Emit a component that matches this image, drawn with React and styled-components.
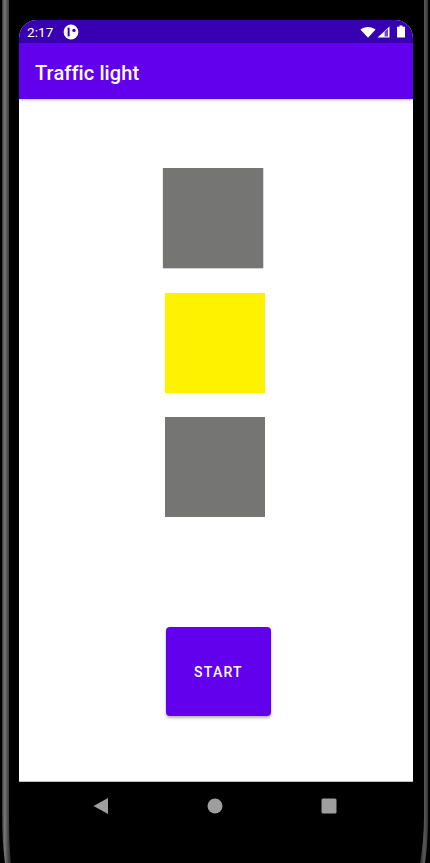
import React from 'react';
import styled, { createGlobalStyle } from 'styled-components';

const GlobalStyle = createGlobalStyle`
  html, body {
    margin: 0;
    padding: 0;
    background: #000;
  }
  body {
    font-family: Roboto, 'Liberation Sans', sans-serif;
  }
`;

const App = () => {
  return (
    <Device>
      <GlobalStyle />
      <Bezel width="430" height="863" viewBox="0 0 430 863">
        <defs>
          <linearGradient id="leftEdge" x1="0" x2="1" y1="0" y2="0">
            <stop offset="0" stopColor="#363638" />
            <stop offset="0.3" stopColor="#79797c" />
            <stop offset="0.65" stopColor="#4a4a4c" />
            <stop offset="1" stopColor="#252527" />
          </linearGradient>
          <linearGradient id="rightEdge" x1="0" x2="1" y1="0" y2="0">
            <stop offset="0" stopColor="#252527" />
            <stop offset="0.5" stopColor="#58585c" />
            <stop offset="1" stopColor="#38383a" />
          </linearGradient>
        </defs>
        <path d="M2 0 H9 V815 Q9 845 11 863 H5 Q2 840 2 815 Z" fill="url(#leftEdge)" />
        <path d="M424 0 H428 V815 Q428 845 425 863 H420 Q424 840 424 815 Z" fill="url(#rightEdge)" />
      </Bezel>
      <Screen>
        <StatusBar>
          <StatusLeft>
            <Time>2:17</Time>
            <svg width="16" height="16" viewBox="0 0 16 16">
              <circle cx="8" cy="8" r="7.4" fill="#fff" />
              <rect x="4.6" y="3.6" width="2" height="8.8" fill="#3700b3" />
              <circle cx="11" cy="6.4" r="1.7" fill="#3700b3" />
            </svg>
          </StatusLeft>
          <StatusRight>
            <svg width="16" height="12" viewBox="0 0 16 12">
              <path d="M0.4 3.6 C4.6 0 11.4 0 15.6 3.6 L8 11.8 Z" fill="#fff" />
            </svg>
            <svg width="13" height="12" viewBox="0 0 13 12">
              <path d="M0.5 11.5 L12.5 0.5 V11.5 Z" fill="#fff" />
              <path d="M7.6 10.4 V5.6 L11 2.8 V10.4 Z" fill="#6a4bc4" />
            </svg>
            <BatteryIcon width="8" height="13" viewBox="0 0 8 13">
              <path d="M2.5 0.5 H5.5 V1.8 H8 V12.5 H0 V1.8 H2.5 Z" fill="#fff" />
            </BatteryIcon>
          </StatusRight>
        </StatusBar>
        <AppBar>Traffic light</AppBar>
        <Content>
          <Light $color="#757573" $shift={0} $soft />
          <Light $color="#fff200" $shift={2} />
          <Light $color="#757573" $shift={2} />
          <StartButton>START</StartButton>
        </Content>
      </Screen>
      <NavBar>
        <svg width="16" height="16" viewBox="0 0 16 16">
          <path d="M15 0 V16 L0.5 8 Z" fill="#9e9e9e" />
        </svg>
        <svg width="16" height="16" viewBox="0 0 16 16">
          <circle cx="8" cy="8" r="7.5" fill="#9e9e9e" />
        </svg>
        <svg width="16" height="16" viewBox="0 0 16 16">
          <rect x="0.5" y="0.5" width="15" height="15" rx="1.5" fill="#9e9e9e" />
        </svg>
      </NavBar>
    </Device>
  );
};

const Device = styled.div`
  position: relative;
  width: 430px;
  height: 863px;
  padding-top: 20px;
  box-sizing: border-box;
  background: #000;
  overflow: hidden;
`;

const Bezel = styled.svg`
  position: absolute;
  top: 0;
  left: 0;
`;

const Screen = styled.div`
  position: relative;
  width: 394px;
  height: 761px;
  margin-left: 19px;
  border-radius: 18px 18px 0 0;
  background: #fff;
  border-bottom: 1px solid #bdbdbd;
  overflow: hidden;
`;

const StatusBar = styled.div`
  display: flex;
  align-items: center;
  justify-content: space-between;
  height: 23px;
  padding: 0 8px;
  background: #3700b3;
  color: #fff;
`;

const StatusLeft = styled.div`
  display: flex;
  align-items: center;
  gap: 10px;
`;

const Time = styled.span`
  font-size: 13.5px;
  letter-spacing: 0.1px;
`;

const StatusRight = styled.div`
  display: flex;
  align-items: center;
  gap: 1px;
`;

const BatteryIcon = styled.svg`
  margin-left: 6px;
`;

const AppBar = styled.div`
  display: flex;
  align-items: center;
  height: 56px;
  padding: 3px 0 0 16px;
  box-sizing: border-box;
  background: #6200ee;
  color: #fff;
  font-size: 20px;
  font-weight: 500;
  letter-spacing: 0.1px;
  box-shadow: 0 1px 3px rgba(0, 0, 0, 0.25);
`;

const Content = styled.div`
  display: flex;
  flex-direction: column;
  align-items: flex-start;
  gap: 24.5px;
  padding: 69px 0 0 144px;
`;

const Light = styled.div`
  width: 100px;
  height: 100px;
  margin-left: ${({ $shift }) => $shift}px;
  background: ${({ $color }) => $color};
  box-shadow: ${({ $soft }) =>
    $soft ? '1px 0 0 #d8d8d8, -1px 0 0 #eeeeee, 0 1px 0 #d0d0d0' : 'none'};
`;

const StartButton = styled.button`
  width: 105px;
  height: 89px;
  margin: 85px 0 0 3px;
  padding: 2px 0 0;
  border: none;
  border-radius: 4px;
  background: #6200ee;
  color: #fff;
  font-family: Roboto, 'Liberation Sans', sans-serif;
  font-size: 14px;
  font-weight: 500;
  letter-spacing: 1.25px;
  box-shadow: 0 2px 3px rgba(0, 0, 0, 0.3);
`;

const NavBar = styled.div`
  position: relative;
  display: flex;
  align-items: center;
  justify-content: space-between;
  width: 244px;
  margin: 16px 0 0 93px;
`;

export default App;
